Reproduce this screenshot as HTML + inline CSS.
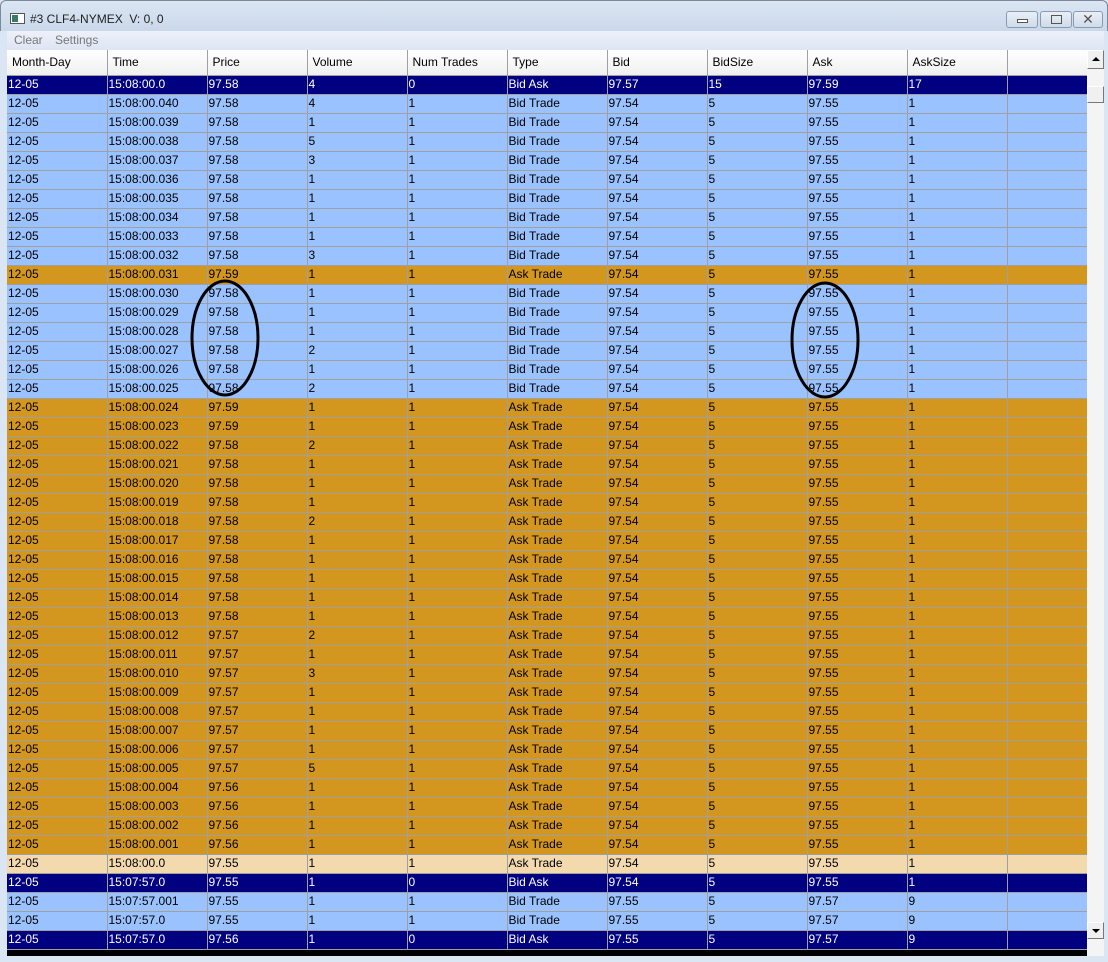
<!DOCTYPE html>
<html><head><meta charset="utf-8"><style>
*{margin:0;padding:0;box-sizing:border-box}
body{width:1108px;height:962px;background:#dae6f3;position:relative;overflow:hidden;font-family:"Liberation Sans",sans-serif;font-size:12px}
#title{position:absolute;left:0;top:0;width:1108px;height:31px;background:linear-gradient(#dbe6f3,#c9d8ea);border:1px solid #7a8a9c;border-bottom:none;border-radius:6px 6px 0 0}
#title .ic{position:absolute;left:9px;top:12px;width:15px;height:11px;border:1px solid #555;background:#fff}
#title .ic:before{content:"";position:absolute;left:1px;top:1px;width:6px;height:7px;background:#3a7a6a}
#title .t{position:absolute;left:29px;top:11px;font-size:12px;color:#222}
.wb{position:absolute;top:10px;height:17px;border:1px solid #8a9bb0;border-radius:3px;background:linear-gradient(#e9eff7,#cfdbea)}
#menu{position:absolute;left:7px;top:31px;width:1097px;height:18px;background:linear-gradient(#eef1fa,#dfe5f4);color:#777;font-size:12px}
#menu span{position:absolute;top:2px}
#tbl{position:absolute;left:7px;top:50px;width:1080px;height:906px;background:#000;overflow:hidden}
table{border-collapse:collapse;table-layout:fixed;width:1080px}
td,th{height:19px;border-right:1px solid #a0a0a0;border-bottom:1px solid #a0a0a0;padding:0 0 0 1px;white-space:nowrap;overflow:hidden;font-weight:normal;text-align:left;line-height:17px}
th{height:25px;background:linear-gradient(#fff,#f0f0f0);padding-left:5px;color:#000;border-bottom:1px solid #a0a0a0}
tr.n td{background:#000080;color:#fff}
tr.b td{background:#99c2ff;color:#000}
tr.o td{background:#d3961f;color:#000}
tr.y td{background:#f3d9ae;color:#000}
#sb{position:absolute;left:1087px;top:50px;width:17px;height:906px;background:#f4f4f4}
.btn{position:absolute;left:0;width:17px;background:#f0f0f0;border:1px solid #fff;border-right-color:#777;border-bottom-color:#777}
</style></head><body>
<div id="title"><div class="ic"></div><div class="t">#3 CLF4-NYMEX&nbsp; V: 0, 0</div>
<div class="wb" style="left:1005px;width:32px"><div style="position:absolute;left:10px;top:7px;width:11px;height:4px;border:1px solid #555;background:#fff"></div></div>
<div class="wb" style="left:1039px;width:32px"><div style="position:absolute;left:10px;top:3px;width:11px;height:9px;border:1px solid #555"></div></div>
<div class="wb" style="left:1072px;width:30px;color:#555;font-size:14px;text-align:center;line-height:15px">✕</div>
</div>
<div id="menu"><span style="left:7px">Clear</span><span style="left:48px">Settings</span></div>
<div id="tbl"><table>
<colgroup><col style="width:100px"><col style="width:100px"><col style="width:100px"><col style="width:100px"><col style="width:100px"><col style="width:100px"><col style="width:100px"><col style="width:100px"><col style="width:100px"><col style="width:100px"><col style="width:80px"></colgroup>
<tr><th>Month-Day</th><th>Time</th><th>Price</th><th>Volume</th><th>Num Trades</th><th>Type</th><th>Bid</th><th>BidSize</th><th>Ask</th><th>AskSize</th><th></th></tr>
<tr class="n"><td>12-05</td><td>15:08:00.0</td><td>97.58</td><td>4</td><td>0</td><td>Bid Ask</td><td>97.57</td><td>15</td><td>97.59</td><td>17</td><td></td></tr>
<tr class="b"><td>12-05</td><td>15:08:00.040</td><td>97.58</td><td>4</td><td>1</td><td>Bid Trade</td><td>97.54</td><td>5</td><td>97.55</td><td>1</td><td></td></tr>
<tr class="b"><td>12-05</td><td>15:08:00.039</td><td>97.58</td><td>1</td><td>1</td><td>Bid Trade</td><td>97.54</td><td>5</td><td>97.55</td><td>1</td><td></td></tr>
<tr class="b"><td>12-05</td><td>15:08:00.038</td><td>97.58</td><td>5</td><td>1</td><td>Bid Trade</td><td>97.54</td><td>5</td><td>97.55</td><td>1</td><td></td></tr>
<tr class="b"><td>12-05</td><td>15:08:00.037</td><td>97.58</td><td>3</td><td>1</td><td>Bid Trade</td><td>97.54</td><td>5</td><td>97.55</td><td>1</td><td></td></tr>
<tr class="b"><td>12-05</td><td>15:08:00.036</td><td>97.58</td><td>1</td><td>1</td><td>Bid Trade</td><td>97.54</td><td>5</td><td>97.55</td><td>1</td><td></td></tr>
<tr class="b"><td>12-05</td><td>15:08:00.035</td><td>97.58</td><td>1</td><td>1</td><td>Bid Trade</td><td>97.54</td><td>5</td><td>97.55</td><td>1</td><td></td></tr>
<tr class="b"><td>12-05</td><td>15:08:00.034</td><td>97.58</td><td>1</td><td>1</td><td>Bid Trade</td><td>97.54</td><td>5</td><td>97.55</td><td>1</td><td></td></tr>
<tr class="b"><td>12-05</td><td>15:08:00.033</td><td>97.58</td><td>1</td><td>1</td><td>Bid Trade</td><td>97.54</td><td>5</td><td>97.55</td><td>1</td><td></td></tr>
<tr class="b"><td>12-05</td><td>15:08:00.032</td><td>97.58</td><td>3</td><td>1</td><td>Bid Trade</td><td>97.54</td><td>5</td><td>97.55</td><td>1</td><td></td></tr>
<tr class="o"><td>12-05</td><td>15:08:00.031</td><td>97.59</td><td>1</td><td>1</td><td>Ask Trade</td><td>97.54</td><td>5</td><td>97.55</td><td>1</td><td></td></tr>
<tr class="b"><td>12-05</td><td>15:08:00.030</td><td>97.58</td><td>1</td><td>1</td><td>Bid Trade</td><td>97.54</td><td>5</td><td>97.55</td><td>1</td><td></td></tr>
<tr class="b"><td>12-05</td><td>15:08:00.029</td><td>97.58</td><td>1</td><td>1</td><td>Bid Trade</td><td>97.54</td><td>5</td><td>97.55</td><td>1</td><td></td></tr>
<tr class="b"><td>12-05</td><td>15:08:00.028</td><td>97.58</td><td>1</td><td>1</td><td>Bid Trade</td><td>97.54</td><td>5</td><td>97.55</td><td>1</td><td></td></tr>
<tr class="b"><td>12-05</td><td>15:08:00.027</td><td>97.58</td><td>2</td><td>1</td><td>Bid Trade</td><td>97.54</td><td>5</td><td>97.55</td><td>1</td><td></td></tr>
<tr class="b"><td>12-05</td><td>15:08:00.026</td><td>97.58</td><td>1</td><td>1</td><td>Bid Trade</td><td>97.54</td><td>5</td><td>97.55</td><td>1</td><td></td></tr>
<tr class="b"><td>12-05</td><td>15:08:00.025</td><td>97.58</td><td>2</td><td>1</td><td>Bid Trade</td><td>97.54</td><td>5</td><td>97.55</td><td>1</td><td></td></tr>
<tr class="o"><td>12-05</td><td>15:08:00.024</td><td>97.59</td><td>1</td><td>1</td><td>Ask Trade</td><td>97.54</td><td>5</td><td>97.55</td><td>1</td><td></td></tr>
<tr class="o"><td>12-05</td><td>15:08:00.023</td><td>97.59</td><td>1</td><td>1</td><td>Ask Trade</td><td>97.54</td><td>5</td><td>97.55</td><td>1</td><td></td></tr>
<tr class="o"><td>12-05</td><td>15:08:00.022</td><td>97.58</td><td>2</td><td>1</td><td>Ask Trade</td><td>97.54</td><td>5</td><td>97.55</td><td>1</td><td></td></tr>
<tr class="o"><td>12-05</td><td>15:08:00.021</td><td>97.58</td><td>1</td><td>1</td><td>Ask Trade</td><td>97.54</td><td>5</td><td>97.55</td><td>1</td><td></td></tr>
<tr class="o"><td>12-05</td><td>15:08:00.020</td><td>97.58</td><td>1</td><td>1</td><td>Ask Trade</td><td>97.54</td><td>5</td><td>97.55</td><td>1</td><td></td></tr>
<tr class="o"><td>12-05</td><td>15:08:00.019</td><td>97.58</td><td>1</td><td>1</td><td>Ask Trade</td><td>97.54</td><td>5</td><td>97.55</td><td>1</td><td></td></tr>
<tr class="o"><td>12-05</td><td>15:08:00.018</td><td>97.58</td><td>2</td><td>1</td><td>Ask Trade</td><td>97.54</td><td>5</td><td>97.55</td><td>1</td><td></td></tr>
<tr class="o"><td>12-05</td><td>15:08:00.017</td><td>97.58</td><td>1</td><td>1</td><td>Ask Trade</td><td>97.54</td><td>5</td><td>97.55</td><td>1</td><td></td></tr>
<tr class="o"><td>12-05</td><td>15:08:00.016</td><td>97.58</td><td>1</td><td>1</td><td>Ask Trade</td><td>97.54</td><td>5</td><td>97.55</td><td>1</td><td></td></tr>
<tr class="o"><td>12-05</td><td>15:08:00.015</td><td>97.58</td><td>1</td><td>1</td><td>Ask Trade</td><td>97.54</td><td>5</td><td>97.55</td><td>1</td><td></td></tr>
<tr class="o"><td>12-05</td><td>15:08:00.014</td><td>97.58</td><td>1</td><td>1</td><td>Ask Trade</td><td>97.54</td><td>5</td><td>97.55</td><td>1</td><td></td></tr>
<tr class="o"><td>12-05</td><td>15:08:00.013</td><td>97.58</td><td>1</td><td>1</td><td>Ask Trade</td><td>97.54</td><td>5</td><td>97.55</td><td>1</td><td></td></tr>
<tr class="o"><td>12-05</td><td>15:08:00.012</td><td>97.57</td><td>2</td><td>1</td><td>Ask Trade</td><td>97.54</td><td>5</td><td>97.55</td><td>1</td><td></td></tr>
<tr class="o"><td>12-05</td><td>15:08:00.011</td><td>97.57</td><td>1</td><td>1</td><td>Ask Trade</td><td>97.54</td><td>5</td><td>97.55</td><td>1</td><td></td></tr>
<tr class="o"><td>12-05</td><td>15:08:00.010</td><td>97.57</td><td>3</td><td>1</td><td>Ask Trade</td><td>97.54</td><td>5</td><td>97.55</td><td>1</td><td></td></tr>
<tr class="o"><td>12-05</td><td>15:08:00.009</td><td>97.57</td><td>1</td><td>1</td><td>Ask Trade</td><td>97.54</td><td>5</td><td>97.55</td><td>1</td><td></td></tr>
<tr class="o"><td>12-05</td><td>15:08:00.008</td><td>97.57</td><td>1</td><td>1</td><td>Ask Trade</td><td>97.54</td><td>5</td><td>97.55</td><td>1</td><td></td></tr>
<tr class="o"><td>12-05</td><td>15:08:00.007</td><td>97.57</td><td>1</td><td>1</td><td>Ask Trade</td><td>97.54</td><td>5</td><td>97.55</td><td>1</td><td></td></tr>
<tr class="o"><td>12-05</td><td>15:08:00.006</td><td>97.57</td><td>1</td><td>1</td><td>Ask Trade</td><td>97.54</td><td>5</td><td>97.55</td><td>1</td><td></td></tr>
<tr class="o"><td>12-05</td><td>15:08:00.005</td><td>97.57</td><td>5</td><td>1</td><td>Ask Trade</td><td>97.54</td><td>5</td><td>97.55</td><td>1</td><td></td></tr>
<tr class="o"><td>12-05</td><td>15:08:00.004</td><td>97.56</td><td>1</td><td>1</td><td>Ask Trade</td><td>97.54</td><td>5</td><td>97.55</td><td>1</td><td></td></tr>
<tr class="o"><td>12-05</td><td>15:08:00.003</td><td>97.56</td><td>1</td><td>1</td><td>Ask Trade</td><td>97.54</td><td>5</td><td>97.55</td><td>1</td><td></td></tr>
<tr class="o"><td>12-05</td><td>15:08:00.002</td><td>97.56</td><td>1</td><td>1</td><td>Ask Trade</td><td>97.54</td><td>5</td><td>97.55</td><td>1</td><td></td></tr>
<tr class="o"><td>12-05</td><td>15:08:00.001</td><td>97.56</td><td>1</td><td>1</td><td>Ask Trade</td><td>97.54</td><td>5</td><td>97.55</td><td>1</td><td></td></tr>
<tr class="y"><td>12-05</td><td>15:08:00.0</td><td>97.55</td><td>1</td><td>1</td><td>Ask Trade</td><td>97.54</td><td>5</td><td>97.55</td><td>1</td><td></td></tr>
<tr class="n"><td>12-05</td><td>15:07:57.0</td><td>97.55</td><td>1</td><td>0</td><td>Bid Ask</td><td>97.54</td><td>5</td><td>97.55</td><td>1</td><td></td></tr>
<tr class="b"><td>12-05</td><td>15:07:57.001</td><td>97.55</td><td>1</td><td>1</td><td>Bid Trade</td><td>97.55</td><td>5</td><td>97.57</td><td>9</td><td></td></tr>
<tr class="b"><td>12-05</td><td>15:07:57.0</td><td>97.55</td><td>1</td><td>1</td><td>Bid Trade</td><td>97.55</td><td>5</td><td>97.57</td><td>9</td><td></td></tr>
<tr class="n"><td>12-05</td><td>15:07:57.0</td><td>97.56</td><td>1</td><td>0</td><td>Bid Ask</td><td>97.55</td><td>5</td><td>97.57</td><td>9</td><td></td></tr>
</table></div>
<svg style="position:absolute;left:0;top:0" width="1108" height="962"><ellipse cx="225" cy="338" rx="33" ry="57" fill="none" stroke="#000" stroke-width="3"/><ellipse cx="825" cy="340" rx="33" ry="57" fill="none" stroke="#000" stroke-width="3"/></svg>
<div id="sb">
<div class="btn" style="top:0;height:19px"><div style="position:absolute;left:4px;top:6px;border-left:4px solid transparent;border-right:4px solid transparent;border-bottom:4px solid #000"></div></div>
<div class="btn" style="top:36px;height:17px"></div>
<div class="btn" style="top:872px;height:17px"><div style="position:absolute;left:4px;top:6px;border-left:4px solid transparent;border-right:4px solid transparent;border-top:4px solid #000"></div></div>
</div>
</body></html>
